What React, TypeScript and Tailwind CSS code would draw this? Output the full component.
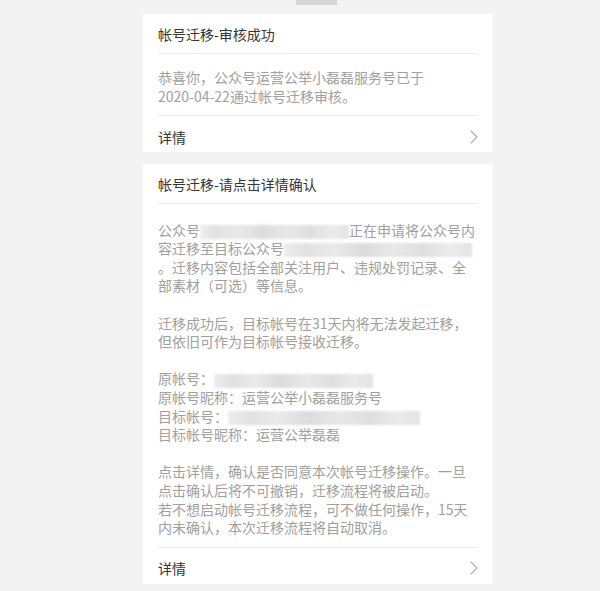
import type { ReactNode } from "react";

interface NoticeCardProps {
  title: string;
  children: ReactNode;
  bodyClassName?: string;
}

// Blurred placeholder for masked account names
function Masked({ width }: { width: string }) {
  return (
    <span
      className={`inline-block h-[14px] align-middle blur-[1.2px] bg-[linear-gradient(90deg,#ededed_0%,#e1e1e1_12%,#eaeaea_26%,#dcdcdc_42%,#e8e8e8_58%,#dfdfdf_74%,#ebebeb_88%,#e4e4e4_100%)] ${width}`}
    />
  );
}

function Chevron() {
  return (
    <svg width="8" height="14" viewBox="0 0 8 14" fill="none">
      <path
        d="M1 1l6 6-6 6"
        stroke="#b4b4b4"
        strokeWidth={1.4}
        strokeLinecap="round"
        strokeLinejoin="round"
      />
    </svg>
  );
}

function NoticeCard({ title, children, bodyClassName = "pt-[14px]" }: NoticeCardProps) {
  return (
    <div className="bg-white px-[15px]">
      {/* Title */}
      <div className="h-[40px] border-b border-[#ececec] pt-[10px] text-[14px] leading-[20px] text-[#353535]">
        {title}
      </div>

      {/* Message body */}
      <div
        className={`border-b border-[#ececec] pb-[10px] text-[14px] leading-[18.6px] text-[#a0a0a0] ${bodyClassName}`}
      >
        {children}
      </div>

      {/* Details link */}
      <div className="flex h-[36px] items-center justify-between pt-[5px] text-[14px] leading-[20px] text-[#353535]">
        <span>详情</span>
        <Chevron />
      </div>
    </div>
  );
}

export default function App() {
  return (
    <div className="min-h-[591px] bg-[#f3f3f3] pb-[7px] font-['Noto_Sans_CJK_SC',sans-serif]">
      {/* Top handle */}
      <div className="ml-[296px] h-[5px] w-[41px] bg-[#d7d7d7]" />

      <div className="ml-[143px] mt-[9px] flex w-[350px] flex-col gap-[12px]">
        <NoticeCard title="帐号迁移-审核成功">
          恭喜你，公众号运营公举小磊磊服务号已于
          <br />
          2020-04-22通过帐号迁移审核。
        </NoticeCard>

        <NoticeCard title="帐号迁移-请点击详情确认" bodyClassName="pt-[16.5px]">
          公众号
          <Masked width="w-[149px]" />
          正在申请将公众号内
          <br />
          容迁移至目标公众号
          <Masked width="w-[188px]" />
          <br />
          。迁移内容包括全部关注用户、违规处罚记录、全
          <br />
          部素材（可选）等信息。
          <br />
          <br />
          迁移成功后，目标帐号在31天内将无法发起迁移，
          <br />
          但依旧可作为目标帐号接收迁移。
          <br />
          <br />
          原帐号：
          <Masked width="w-[159px]" />
          <br />
          原帐号昵称：运营公举小磊磊服务号
          <br />
          目标帐号：
          <Masked width="w-[192px]" />
          <br />
          目标帐号昵称：运营公举磊磊
          <br />
          <br />
          点击详情，确认是否同意本次帐号迁移操作。一旦
          <br />
          点击确认后将不可撤销，迁移流程将被启动。
          <br />
          若不想启动帐号迁移流程，可不做任何操作，15天
          <br />
          内未确认，本次迁移流程将自动取消。
        </NoticeCard>
      </div>
    </div>
  );
}
